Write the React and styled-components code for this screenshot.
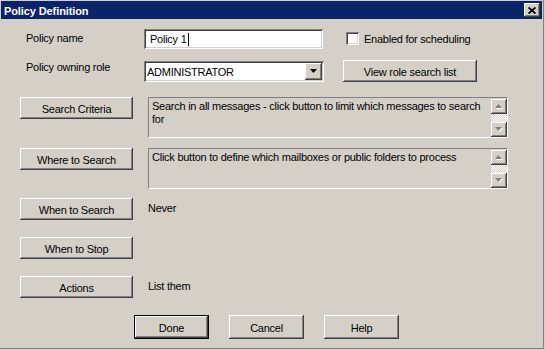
import styled, { createGlobalStyle } from 'styled-components';

const Global = createGlobalStyle`
  html, body { margin: 0; padding: 0; background: #d4d0c8; }
  body { font-family: "Liberation Sans", Arial, sans-serif; font-size: 11px; color: #000; letter-spacing: -0.25px; }
`;

const raised = `
  background: #d4d0c8;
  box-shadow: inset -1px -1px #404040, inset 1px 1px #ffffff, inset -2px -2px #808080, inset 2px 2px #d4d0c8;
`;

const sunken = `
  box-shadow: inset 1px 1px #808080, inset -1px -1px #ffffff, inset 2px 2px #404040, inset -2px -2px #d4d0c8;
`;

const Window = styled.div`
  width: 545px;
  height: 350px;
  box-sizing: border-box;
  background: #d4d0c8;
  padding: 1px 3px 0 1px;
  box-shadow: inset -1px -1px #d4d0c8, inset -2px -2px #808080;
  display: flex;
  flex-direction: column;
`;

const TitleBar = styled.div`
  height: 18px;
  background: #0a246a;
  display: flex;
  align-items: center;
  justify-content: space-between;
  padding: 0 2px 0 3px;
`;

const Title = styled.span`
  color: #fff;
  font-weight: bold;
  font-size: 11px;
  letter-spacing: -0.1px;
  padding-top: 1px;
`;

const CloseBtn = styled.div`
  width: 16px;
  height: 14px;
  ${raised}
  display: flex;
  align-items: center;
  justify-content: center;
`;

const Body = styled.div`
  flex: 1;
  display: flex;
  flex-direction: column;
  padding: 10px 0 0 0;
`;

const TopGrid = styled.div`
  display: grid;
  grid-template-columns: 118px 180px auto;
  grid-template-rows: 20px 22px;
  row-gap: 11px;
  padding-left: 25px;
  align-items: start;
`;

const Label = styled.div`
  padding-top: ${p => p.$top || 0}px;
  white-space: nowrap;
`;

const TextInput = styled.div`
  width: 179px;
  height: 20px;
  box-sizing: border-box;
  background: #fff;
  ${sunken}
  display: flex;
  align-items: center;
  padding-left: 6px;
`;

const Caret = styled.span`
  display: inline-block;
  width: 1px;
  height: 13px;
  background: #000;
  margin-left: 1px;
`;

const Combo = styled.div`
  width: 180px;
  height: 21px;
  margin-top: 1px;
  box-sizing: border-box;
  background: #fff;
  ${sunken}
  display: flex;
  align-items: center;
  justify-content: space-between;
  padding: 2px 2px 2px 3px;
`;

const DropBtn = styled.div`
  width: 17px;
  height: 17px;
  ${raised}
  display: flex;
  align-items: center;
  justify-content: center;
`;

const CheckRow = styled.label`
  display: flex;
  align-items: center;
  gap: 5px;
  margin-left: 22px;
  margin-top: 3px;
`;

const CheckBox = styled.span`
  width: 13px;
  height: 13px;
  box-sizing: border-box;
  background: #fff;
  ${sunken}
`;

const Button = styled.div`
  width: ${p => p.$w}px;
  height: ${p => p.$h || 22}px;
  margin-left: ${p => p.$ml || 0}px;
  box-sizing: border-box;
  ${raised}
  ${p => p.$default && `
    border: 1px solid #000;
    box-shadow: inset -1px -1px #404040, inset 1px 1px #ffffff, inset -2px -2px #808080, inset 2px 2px #d4d0c8;
  `}
  display: flex;
  align-items: center;
  justify-content: center;
  padding-top: 1px;
  flex-shrink: 0;
`;

const Actions = styled.div`
  display: flex;
  flex-direction: column;
  padding: 0 0 0 19px;
  margin-top: 15px;
`;

const ActionRow = styled.div`
  display: flex;
  align-items: flex-start;
  gap: 15px;
  height: ${p => p.$h}px;
`;

const TextBox = styled.div`
  width: 360px;
  height: 41px;
  box-sizing: border-box;
  border-top: 1px solid #808080;
  border-left: 1px solid #808080;
  border-bottom: 1px solid #fff;
  border-right: 1px solid #fff;
  padding: 1px 0 0 0;
  display: flex;
`;

const BoxText = styled.div`
  flex: 1;
  padding: 1px 2px 0 3px;
  line-height: 13px;
`;

const ScrollBar = styled.div`
  width: 16px;
  display: flex;
  flex-direction: column;
`;

const ScrollBtn = styled.div`
  height: 15px;
  ${raised}
  display: flex;
  align-items: center;
  justify-content: center;
`;

const Track = styled.div`
  flex: 1;
  background: repeating-conic-gradient(#ffffff 0 25%, #d4d0c8 0 50%) 0 0 / 2px 2px;
`;

const Note = styled.div`
  padding-top: 4px;
`;

const Footer = styled.div`
  display: flex;
  gap: 20px;
  padding-left: 133px;
`;

function Arrow({ down, color = '#808080', shadow = true }) {
  const pts = down ? '0,0 7,0 3.5,4' : '3.5,0 7,4 0,4';
  return (
    <svg width="8" height="5" viewBox="0 0 8 5" style={{ overflow: 'visible' }}>
      {shadow && <polygon points={pts} fill="#fff" transform="translate(1,1)" />}
      <polygon points={pts} fill={color} />
    </svg>
  );
}

function Scroll() {
  return (
    <ScrollBar>
      <ScrollBtn><Arrow /></ScrollBtn>
      <Track />
      <ScrollBtn><Arrow down /></ScrollBtn>
    </ScrollBar>
  );
}

export default function App() {
  return (
    <>
      <Global />
      <Window>
        <TitleBar>
          <Title>Policy Definition</Title>
          <CloseBtn>
            <svg width="8" height="7" viewBox="0 0 8 7">
              <path d="M0.5 0.5 L7.5 6.5 M7.5 0.5 L0.5 6.5" stroke="#000" strokeWidth="1.8" />
            </svg>
          </CloseBtn>
        </TitleBar>
        <Body>
          <TopGrid>
            <Label $top={3}>Policy name</Label>
            <TextInput>Policy 1<Caret /></TextInput>
            <CheckRow><CheckBox />Enabled for scheduling</CheckRow>
            <Label $top={1}>Policy owning role</Label>
            <Combo>
              <span>ADMINISTRATOR</span>
              <DropBtn><Arrow down color="#000" shadow={false} /></DropBtn>
            </Combo>
            <Button $w={134} $ml={19}>View role search list</Button>
          </TopGrid>
          <Actions>
            <ActionRow $h={51}>
              <Button $w={113}>Search Criteria</Button>
              <TextBox>
                <BoxText>Search in all messages - click button to limit which messages to search for</BoxText>
                <Scroll />
              </TextBox>
            </ActionRow>
            <ActionRow $h={50}>
              <Button $w={113}>Where to Search</Button>
              <TextBox>
                <BoxText>Click button to define which mailboxes or public folders to process</BoxText>
                <Scroll />
              </TextBox>
            </ActionRow>
            <ActionRow $h={39}>
              <Button $w={113}>When to Search</Button>
              <Note>Never</Note>
            </ActionRow>
            <ActionRow $h={39}>
              <Button $w={113}>When to Stop</Button>
            </ActionRow>
            <ActionRow $h={39}>
              <Button $w={113}>Actions</Button>
              <Note>List them</Note>
            </ActionRow>
          </Actions>
          <Footer>
            <Button $w={75} $h={24} $default>Done</Button>
            <Button $w={75} $h={24}>Cancel</Button>
            <Button $w={75} $h={24}>Help</Button>
          </Footer>
        </Body>
      </Window>
    </>
  );
}
